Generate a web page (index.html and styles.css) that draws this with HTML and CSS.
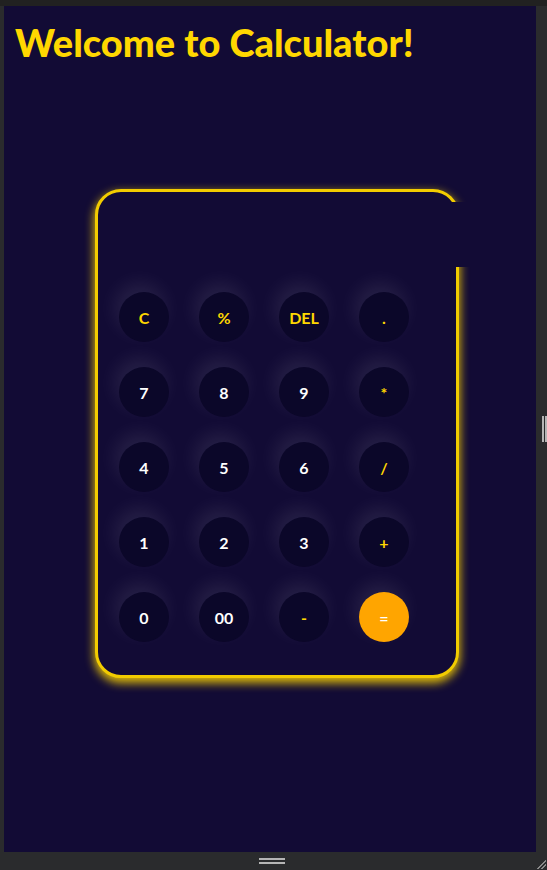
FILE: index.html
```html
<!DOCTYPE html>
<html>
<head>
<meta charset="utf-8">
<link rel="stylesheet" href="styles.css">
</head>
<body>
<div class="frame">
  <div class="topbar"></div>
  <div class="middle">
    <div class="leftbar"></div>
    <main class="page">
      <h1 class="title">Welcome to Calculator!</h1>
      <div class="calc">
        <div class="display"></div>
        <div class="keys">
          <button class="key op">C</button>
          <button class="key op">%</button>
          <button class="key op">DEL</button>
          <button class="key op">.</button>
          <button class="key">7</button>
          <button class="key">8</button>
          <button class="key">9</button>
          <button class="key op">*</button>
          <button class="key">4</button>
          <button class="key">5</button>
          <button class="key">6</button>
          <button class="key op">/</button>
          <button class="key">1</button>
          <button class="key">2</button>
          <button class="key">3</button>
          <button class="key op">+</button>
          <button class="key">0</button>
          <button class="key">00</button>
          <button class="key op">-</button>
          <button class="key eq">=</button>
        </div>
      </div>
    </main>
    <div class="rightbar"><span class="vhandle"></span></div>
  </div>
  <div class="bottombar"><span class="hhandle"></span><span class="corner"></span></div>
</div>
</body>
</html>
```
FILE: styles.css
```css
* { box-sizing: border-box; }
html, body { margin: 0; padding: 0; }
body { width: 547px; height: 870px; overflow: hidden; background: #2a2b2d; font-family: "Lato", "DejaVu Sans", sans-serif; }
.frame { display: flex; flex-direction: column; width: 547px; height: 870px; }
.topbar { height: 6px; background: #212121; flex: none; }
.middle { display: flex; flex: 1; min-height: 0; }
.leftbar { width: 4px; background: #2a2b2d; flex: none; }
.rightbar { width: 11px; background: #2a2b2d; flex: none; display: flex; align-items: flex-start; padding-top: 410px; padding-left: 6px; }
.vhandle { width: 5px; height: 26px; border-left: 2px solid #b5b5b5; border-right: 2px solid #b5b5b5; }
.bottombar { height: 18px; background: #2a2b2d; flex: none; display: flex; justify-content: center; align-items: center; position: relative; }
.hhandle { width: 26px; height: 6px; border-top: 2px solid #b5b5b5; border-bottom: 2px solid #b5b5b5; margin-left: -4px; }
.corner { position: absolute; right: 1px; bottom: 1px; width: 10px; height: 10px; background: linear-gradient(135deg, transparent 55%, #8a8a8a 55%, #8a8a8a 63%, transparent 63%, transparent 75%, #8a8a8a 75%, #8a8a8a 83%, transparent 83%); }
.page { flex: 1; background: #120b35; padding: 13px 11px 0; overflow: hidden; }
.title { margin: 0; color: #ffd700; font-family: "Lato", sans-serif; font-weight: 900; font-size: 38px; line-height: 46px; letter-spacing: 0px; }
.calc { margin-top: 124px; margin-left: 80px; width: 364px; height: 489px; border: 3px solid #f2cc00; border-radius: 26px; background: #120b35; box-shadow: 0 4px 10px 1px rgba(255, 215, 0, 0.85); padding: 10px 0 0 21px; }
.display { width: 356px; height: 65px; background: #120b35; position: relative; }
.keys { margin-top: 25px; display: grid; grid-template-columns: repeat(4, 50px); column-gap: 30px; row-gap: 25px; }
.key { width: 50px; height: 50px; border-radius: 50%; border: none; padding: 0; background: #0b0729; color: #ffffff; font-family: "Lato", sans-serif; font-weight: 700; font-size: 16px; box-shadow: -4px -9px 20px rgba(255, 255, 255, 0.09); display: flex; align-items: center; justify-content: center; }
.key.op { color: #ffd700; }
.key.eq { background: #ffa500; color: #ffffff; }
```
